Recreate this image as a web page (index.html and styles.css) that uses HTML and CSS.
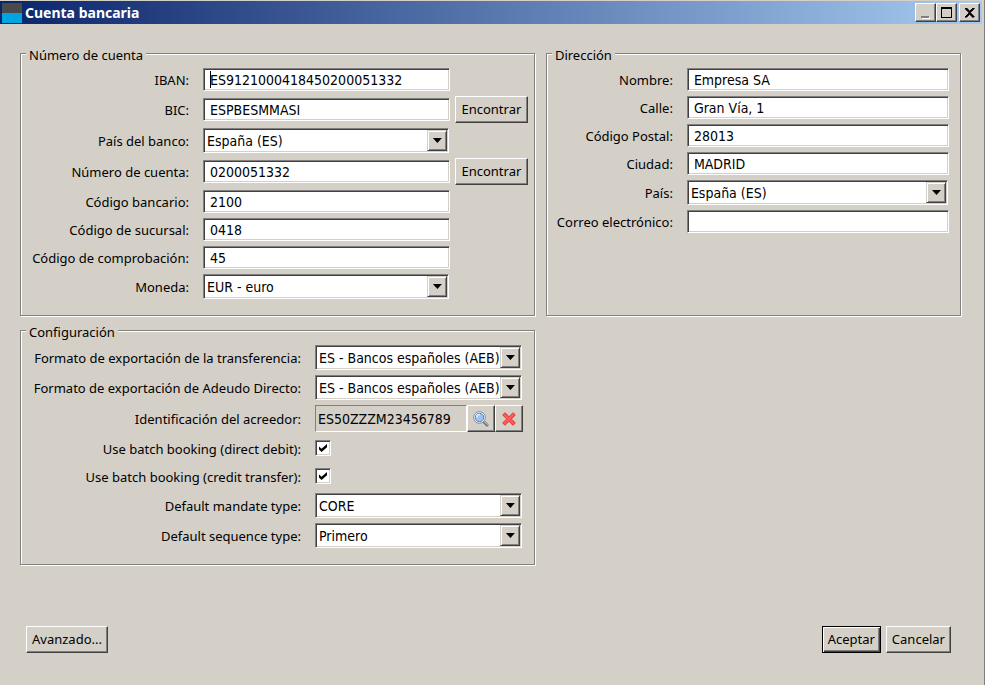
FILE: index.html
```html
<!DOCTYPE html>
<html lang="es">
<head>
    <meta charset="UTF-8">
    <meta name="viewport" content="width=device-width, initial-scale=1.0">
    <title>Cuenta bancaria</title>
    <link rel="stylesheet" href="styles.css">
</head>
<body>
    <form class="window">
        <!-- Barra de título -->
        <header class="titlebar">
            <svg class="app-icon" width="20" height="20" viewBox="0 0 20 20" aria-hidden="true">
                <rect width="20" height="10" fill="#4a4a4a"/>
                <rect y="10" width="20" height="10" fill="#00a4e0"/>
            </svg>
            <h1>Cuenta bancaria</h1>
            <div class="window-buttons">
                <button type="button" class="win-btn" aria-label="Minimizar">
                    <svg width="17" height="15" viewBox="0 0 17 15" shape-rendering="crispEdges"><path d="M5 12h8v2h-8z" fill="#fff"/><path d="M4 11h8v2H4z" fill="#808080"/></svg>
                </button>
                <button type="button" class="win-btn" aria-label="Maximizar">
                    <svg width="17" height="15" viewBox="0 0 17 15" shape-rendering="crispEdges"><path fill-rule="evenodd" d="M3 2h11v11H3zM4 4v8h9V4z"/></svg>
                </button>
                <button type="button" class="win-btn close" aria-label="Cerrar">
                    <svg width="17" height="15" viewBox="0 0 17 15" shape-rendering="crispEdges"><path d="M4 3h2v1h1v1h1v1h1v-1h1v-1h1v-1h2v1h-1v1h-1v1h-1v1h-1v1h1v1h1v1h1v1h1v1h-2v-1h-1v-1h-1v-1h-1v1h-1v1h-1v1h-2v-1h1v-1h1v-1h1v-1h1v-1h-1v-1h-1v-1h-1v-1h-1z" stroke="#000" stroke-width=".6"/></svg>
                </button>
            </div>
        </header>

        <main class="content">
            <fieldset class="group account">
                <legend>Número de cuenta</legend>
                <div class="fields">
                    <label for="iban">IBAN:</label>
                    <input type="text" class="text caret" id="iban" value="ES9121000418450200051332">

                    <label for="bic">BIC:</label>
                    <input type="text" class="text" id="bic" value="ESPBESMMASI">
                    <button type="button" class="btn">Encontrar</button>

                    <label for="pais-banco">País del banco:</label>
                    <div class="combo"><select id="pais-banco"><option>España (ES)</option></select></div>

                    <label for="cuenta">Número de cuenta:</label>
                    <input type="text" class="text" id="cuenta" value="0200051332">
                    <button type="button" class="btn">Encontrar</button>

                    <label for="banco">Código bancario:</label>
                    <input type="text" class="text" id="banco" value="2100">

                    <label for="sucursal">Código de sucursal:</label>
                    <input type="text" class="text" id="sucursal" value="0418">

                    <label for="control">Código de comprobación:</label>
                    <input type="text" class="text" id="control" value="45">

                    <label for="moneda">Moneda:</label>
                    <div class="combo"><select id="moneda"><option>EUR - euro</option></select></div>
                </div>
            </fieldset>

            <fieldset class="group address">
                <legend>Dirección</legend>
                <div class="fields">
                    <label for="nombre">Nombre:</label>
                    <input type="text" class="text" id="nombre" value="Empresa SA">

                    <label for="calle">Calle:</label>
                    <input type="text" class="text" id="calle" value="Gran Vía, 1">

                    <label for="postal">Código Postal:</label>
                    <input type="text" class="text" id="postal" value="28013">

                    <label for="ciudad">Ciudad:</label>
                    <input type="text" class="text" id="ciudad" value="MADRID">

                    <label for="pais">País:</label>
                    <div class="combo"><select id="pais"><option>España (ES)</option></select></div>

                    <label for="correo">Correo electrónico:</label>
                    <input type="text" class="text" id="correo">
                </div>
            </fieldset>

            <fieldset class="group config">
                <legend>Configuración</legend>
                <div class="fields">
                    <label for="transferencia">Formato de exportación de la transferencia:</label>
                    <div class="combo"><select id="transferencia"><option>ES - Bancos españoles (AEB)</option></select></div>

                    <label for="adeudo">Formato de exportación de Adeudo Directo:</label>
                    <div class="combo"><select id="adeudo"><option>ES - Bancos españoles (AEB)</option></select></div>

                    <label for="acreedor">Identificación del acreedor:</label>
                    <div class="lookup">
                        <input type="text" id="acreedor" value="ES50ZZZM23456789" readonly>
                        <button type="button" class="btn icon-btn" aria-label="Buscar">
                            <svg width="16" height="16" viewBox="0 0 16 16">
                                <path d="M11 11l3 3" stroke="#6f7681" stroke-width="3" stroke-linecap="round"/>
                                <path d="M11 10.500l3.500 3" stroke="#c3c8ce" stroke-width="1" stroke-linecap="round"/>
                                <circle cx="6.500" cy="6.500" r="5.800" fill="#fff" stroke="#7c8793"/>
                                <circle cx="6.500" cy="6.500" r="4.200" fill="#9cc3ee" stroke="#4d84c4"/>
                                <path d="M3.800 6.500a3 3 0 0 1 3-3" fill="none" stroke="#e4f1fd" stroke-width="1.500"/>
                            </svg>
                        </button>
                        <button type="button" class="btn icon-btn" aria-label="Borrar">
                            <svg width="16" height="16" viewBox="0 0 16 16">
                                <path d="M4 4l8 8M12 4l-8 8" stroke="#e83a3a" stroke-width="4" stroke-linecap="square"/>
                                <path d="M4 4l8 8M12 4l-8 8" stroke="#ff5c5c" stroke-width="2.400" stroke-linecap="square"/>
                            </svg>
                        </button>
                    </div>

                    <label for="batch-debit">Use batch booking (direct debit):</label>
                    <div class="check-row"><input type="checkbox" class="check" id="batch-debit" checked></div>

                    <label for="batch-credit">Use batch booking (credit transfer):</label>
                    <div class="check-row"><input type="checkbox" class="check" id="batch-credit" checked></div>

                    <label for="mandate">Default mandate type:</label>
                    <div class="combo"><select id="mandate"><option>CORE</option></select></div>

                    <label for="sequence">Default sequence type:</label>
                    <div class="combo"><select id="sequence"><option>Primero</option></select></div>
                </div>
            </fieldset>
        </main>

        <!-- Botones inferiores -->
        <footer class="actions">
            <button type="button" class="btn">Avanzado...</button>
            <div class="confirm">
                <button type="submit" class="btn default">Aceptar</button>
                <button type="button" class="btn">Cancelar</button>
            </div>
        </footer>
    </form>
</body>
</html>
```

FILE: styles.css
```css
*,
*::before,
*::after {
    margin: 0;
    padding: 0;
    box-sizing: border-box;
}

body,
button {
    font-family: "Noto Sans", "Open Sans", sans-serif;
    font-size: 13px;
    line-height: 19px;
    color: #000;
}

input,
select {
    font-family: "DejaVu Sans Condensed", "Noto Sans", sans-serif;
    font-size: 14px;
    line-height: 19px;
    color: #000;
}

body {
    background-color: #d4d0c8;
}

.window {
    display: flex;
    flex-direction: column;
    min-height: 100vh;
    padding: 1px 2px 0 0;
    border-right: 1px solid #808080;
}

/* Barra de título */
.titlebar {
    display: flex;
    align-items: center;
    height: 23px;
    padding: 0 2px;
    background: linear-gradient(to right, #0a246a, #a6caf0);
}

.titlebar h1 {
    margin-left: 3px;
    font-size: 14px;
    font-weight: bold;
    color: #fff;
}

.window-buttons {
    display: flex;
    margin-left: auto;
}

.win-btn {
    width: 21px;
    height: 19px;
    background-color: #d4d0c8;
    border: 1px solid;
    border-color: #fff #404040 #404040 #fff;
    box-shadow: inset -1px -1px #808080;
}

.win-btn svg {
    display: block;
    margin: 1px;
}

.win-btn.close {
    margin-left: 2px;
}

/* Grupos */
.content {
    display: grid;
    grid-template-columns: 516fr 416fr;
    gap: 3px 11px;
    padding: 18px 21px 20px 20px;
}

.group {
    min-width: 0;
    padding: 3px 11px 16px 9px;
    border: 1px solid #808080;
    box-shadow: inset 1px 1px #fff, 1px 1px #fff;
}

.group legend {
    padding: 4px 3px 0;
    margin-left: -4px;
    background-color: #d4d0c8;
}

.fields {
    display: grid;
    gap: 5px 0;
    align-items: center;
}

.fields label {
    grid-column: 1;
    padding: 2px 14px 0 0;
    text-align: right;
    white-space: nowrap;
}

.account {
    padding-right: 6px;
}

.account .fields {
    grid-template-columns: 173px minmax(0, 1fr) 78px;
}

.account .btn {
    margin-left: 5px;
}

.address .fields {
    grid-template-columns: 131px minmax(0, 1fr);
    align-content: start;
}

.config .fields {
    grid-template-columns: 285px minmax(0, 1fr);
}

/* Campos de texto y listas */
.text,
.combo,
.check {
    background-color: #fff;
    border: 1px solid;
    border-color: #808080 #fff #fff #808080;
    box-shadow: inset 1px 1px #404040, inset -1px -1px #d4d0c8;
}

.text {
    width: 100%;
    height: 23px;
    padding: 1px 6px 0;
    outline: none;
}

.text.caret {
    background-image: linear-gradient(#000, #000);
    background-repeat: no-repeat;
    background-size: 1px 17px;
    background-position: 6px 2px;
}

.combo {
    position: relative;
    height: 25px;
    margin-right: 1px;
}

.combo select {
    display: block;
    width: 100%;
    height: 23px;
    padding: 1px 22px 0 3px;
    background: none;
    border: none;
    outline: none;
    appearance: none;
}

.combo::before {
    content: "";
    position: absolute;
    top: 1px;
    right: 1px;
    bottom: 1px;
    width: 20px;
    background-color: #d4d0c8;
    border: 1px solid;
    border-color: #d4d0c8 #404040 #404040 #d4d0c8;
    box-shadow: inset 1px 1px #fff, inset -1px -1px #808080;
    pointer-events: none;
}

.combo::after {
    content: "";
    position: absolute;
    top: 9px;
    right: 6px;
    width: 9px;
    height: 5px;
    background-color: #000;
    clip-path: polygon(0 0, 100% 0, 50% 100%);
    pointer-events: none;
}

.lookup {
    display: flex;
}

.lookup input {
    flex: 1;
    min-width: 0;
    height: 27px;
    padding: 1px 2px 0;
    background-color: #d4d0c8;
    border: 1px solid;
    border-color: #808080 #fff #fff #808080;
    outline: none;
}

.check-row {
    height: 23px;
    padding-top: 3px;
}

.check {
    display: block;
    width: 16px;
    height: 16px;
    appearance: none;
}

.check:checked::before {
    content: "";
    display: block;
    width: 8px;
    height: 8px;
    margin: 3px;
    background-color: #000;
    clip-path: polygon(0 30%, 32% 60%, 100% 0, 100% 40%, 32% 100%, 0 70%);
}

/* Botones */
.btn {
    height: 27px;
    padding: 0 5px;
    background-color: #d4d0c8;
    border: 1px solid;
    border-color: #fff #404040 #404040 #fff;
    box-shadow: inset -1px -1px #808080;
    white-space: nowrap;
}

.icon-btn {
    display: flex;
    align-items: center;
    justify-content: center;
    width: 28px;
}

.btn.default {
    border-color: #000;
    box-shadow: inset 1px 1px #fff, inset -1px -1px #404040, inset -2px -2px #808080;
}

.actions {
    display: flex;
    justify-content: space-between;
    margin-top: auto;
    padding: 0 31px 32px 26px;
}

.confirm {
    display: flex;
    gap: 5px;
}
```
